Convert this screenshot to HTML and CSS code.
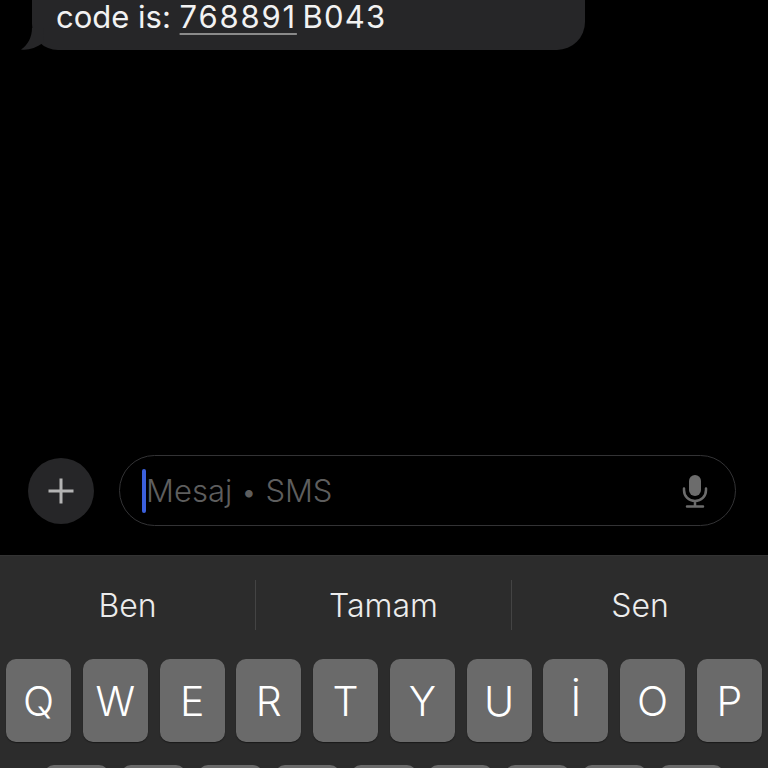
FILE: index.html
```html
<!DOCTYPE html>
<html lang="tr">
<head>
<meta charset="utf-8">
<title>Mesaj</title>
<link rel="stylesheet" href="styles.css">
</head>
<body>
<main class="thread">
  <div class="bubble">
    <svg class="tail" width="24" height="22" viewBox="0 0 24 22"><path d="M12 0 C12 9 8 17 1 21.500 C8 22.500 16 20 23 15 L24 0 Z"/></svg>
    <p class="bubble-text">code is: <span class="code">768891</span> <span class="ref">B043</span></p>
  </div>
</main>
<section class="composer">
  <button class="plus" aria-label="Ekle">
    <svg width="28" height="28" viewBox="0 0 28 28"><path d="M14 1.500V26.500M1.500 14H26.500"/></svg>
  </button>
  <div class="field">
    <span class="caret"></span>
    <span class="placeholder">Mesaj <span class="dot">•</span> SMS</span>
    <svg class="mic" width="26" height="34" viewBox="0 0 26 34">
      <rect class="mic-body" x="7" y="1" width="12" height="21" rx="6"/>
      <path class="mic-line" d="M2 14.500V16C2 22.500 6.800 27 13 27C19.200 27 24 22.500 24 16V14.500M13 27V32M5 32.500H21"/>
    </svg>
  </div>
</section>
<section class="keyboard">
  <div class="suggestions">
    <span class="suggestion">Ben</span>
    <span class="suggestion">Tamam</span>
    <span class="suggestion">Sen</span>
  </div>
  <div class="row">
    <span class="key">Q</span><span class="key">W</span><span class="key">E</span><span class="key">R</span><span class="key">T</span><span class="key">Y</span><span class="key">U</span><span class="key">İ</span><span class="key">O</span><span class="key">P</span>
  </div>
  <div class="row row-two">
    <span class="key"></span><span class="key"></span><span class="key"></span><span class="key"></span><span class="key"></span><span class="key"></span><span class="key"></span><span class="key"></span><span class="key"></span>
  </div>
</section>
</body>
</html>
```
FILE: styles.css
```css
* { box-sizing: border-box; }
html, body { margin: 0; height: 768px; overflow: hidden; background: #000; }
body {
  width: 768px;
  display: flex;
  flex-direction: column;
  font-family: Inter, "Liberation Sans", sans-serif;
  color: #fff;
}
.thread { height: 455px; padding-left: 32px; }
.bubble {
  position: relative;
  width: 553px;
  height: 50px;
  background: #262628;
  border-radius: 0 0 28px 26px;
  padding-left: 24px;
}
.tail { position: absolute; left: -12px; bottom: 0; fill: #262628; }
.bubble-text {
  margin: 0;
  font-size: 31px;
  line-height: 34px;
  color: #f2f2f2;
  white-space: nowrap;
}
.code {
  letter-spacing: 1.8px;
  text-decoration: underline;
  text-decoration-color: #8a8a8a;
  text-decoration-thickness: 1.5px;
  text-underline-offset: 5px;
}
.ref { letter-spacing: 1.2px; margin-left: -3px; }
.composer {
  height: 71px;
  margin-bottom: 29px;
  padding: 0 32px 0 28px;
  display: flex;
  align-items: center;
  gap: 25px;
}
.plus {
  flex: none;
  width: 66px;
  height: 66px;
  padding: 0;
  border: 0;
  border-radius: 50%;
  background: #262628;
  display: flex;
  align-items: center;
  justify-content: center;
}
.plus path { stroke: #b4b4b4; stroke-width: 3; fill: none; }
.field {
  flex: 1;
  height: 71px;
  border: 1.5px solid #333335;
  border-radius: 36px;
  padding: 0 27px 0 22px;
  display: flex;
  align-items: center;
}
.caret {
  flex: none;
  width: 4px;
  height: 44px;
  background: #3b60dc;
  border-radius: 2px;
}
.placeholder {
  flex: 1;
  font-size: 31px;
  font-weight: 300;
  color: #5e5e5e;
  white-space: nowrap;
}
.dot { font-size: 28px; }
.mic { flex: none; }
.mic-body { fill: #6c6c6c; }
.mic-line { fill: none; stroke: #6c6c6c; stroke-width: 2.500; stroke-linecap: round; }
.keyboard { height: 213px; background: #2c2c2c; border-top: 1px solid #333; overflow: hidden; }
.suggestions { display: flex; height: 103px; padding: 24px 0 29px; }
.suggestion {
  flex: 0 0 256px;
  display: flex;
  align-items: center;
  justify-content: center;
  font-size: 32px;
  font-weight: 300;
  color: #ececec;
  border-right: 1.5px solid #444;
}
.suggestion:last-child { border-right: 0; }
.row { display: flex; gap: 11.67px; padding: 0 6px; height: 83px; }
.row-two { margin-top: 23px; padding: 0 44px; }
.key {
  flex: 1;
  height: 83px;
  border-radius: 10px;
  background: #6a6a6a;
  box-shadow: 0 1px 1px #1a1a1a;
  display: flex;
  align-items: center;
  justify-content: center;
  font-size: 41px;
  font-weight: 300;
  color: #fff;
}
```
